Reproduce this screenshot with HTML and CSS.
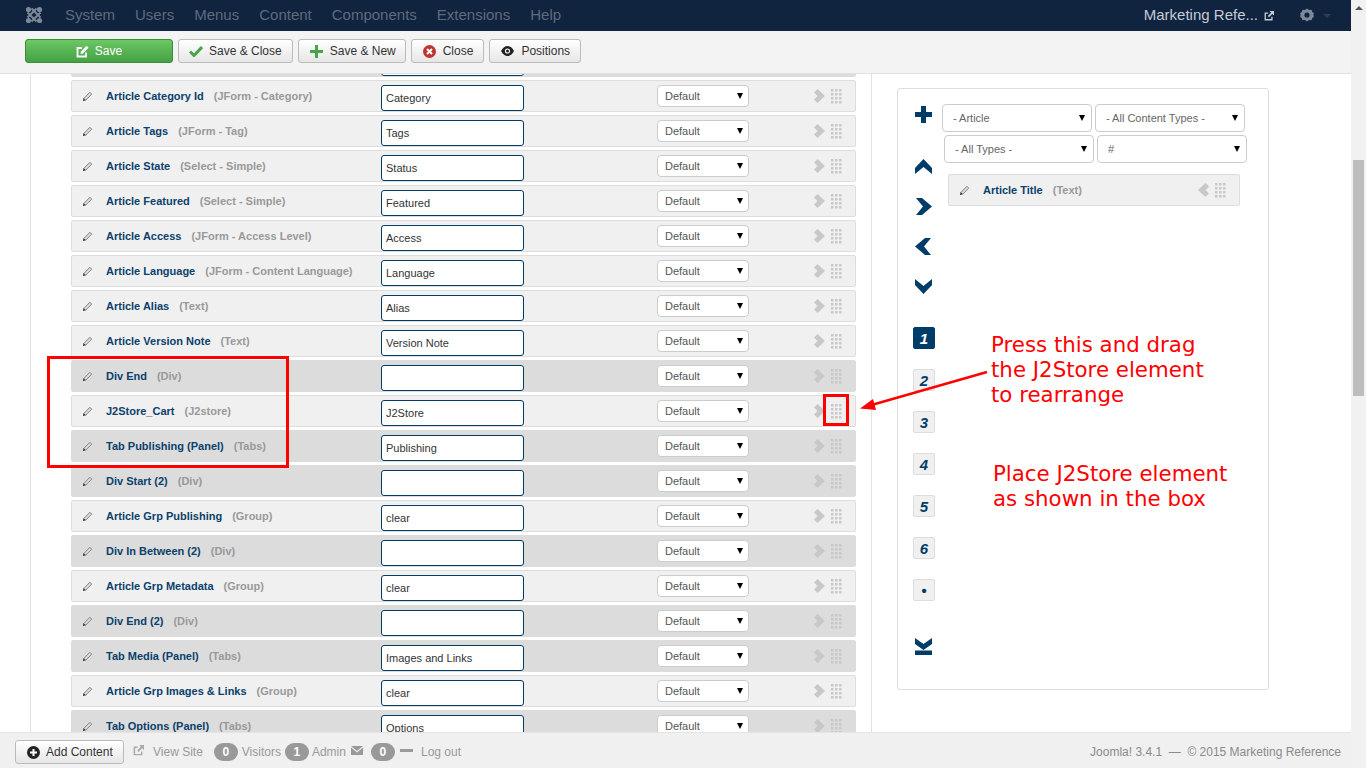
FILE: index.html
```html
<!DOCTYPE html>
<html lang="en">
<head>
    <meta charset="UTF-8">
    <meta name="viewport" content="width=device-width, initial-scale=1.0">
    <title>Template Manager: Edit Layout</title>
    <link rel="stylesheet" href="styles.css">
</head>
<body>
    <!-- Shared icons -->
    <svg class="defs" width="0" height="0">
        <symbol id="pencil" viewBox="0 0 12 12"><path d="M2 8.200L8.600 1.400l2 2L3.900 10.100z" fill="#ddd" stroke="#777" stroke-width="1"/><path d="M1 11l.8-3 2.200 2.200z" fill="#222"/></symbol>
        <symbol id="push" viewBox="0 0 11 14"><path d="M3.500 0L11 7l-7.500 7L0 10.500 3.500 7 0 3.500z" fill="#c8c8c8"/></symbol>
        <symbol id="pull" viewBox="0 0 11 14"><path d="M7.500 0L0 7l7.500 7L11 10.500 7.500 7 11 3.500z" fill="#c8c8c8"/></symbol>
        <symbol id="dots" viewBox="0 0 11 15"><path d="M0 0h2.500v2.500H0zM4 0h2.500v2.500H4zM8 0h2.500v2.500H8zM0 4h2.500v2.500H0zM4 4h2.500v2.500H4zM8 4h2.500v2.500H8zM0 8h2.500v2.500H0zM4 8h2.500v2.500H4zM8 8h2.500v2.500H8zM0 12h2.500v2.500H0zM4 12h2.500v2.500H4zM8 12h2.500v2.500H8z" fill="#c8c8c8"/></symbol>
        <symbol id="ext" viewBox="0 0 12 12"><path d="M9.500 7v3.500h-8v-8H5" fill="none" stroke="currentColor" stroke-width="1.600"/><path d="M6.500 0H12v5.500L10 3.500 6 7.500 4.500 6l4-4z" fill="currentColor"/></symbol>
    </svg>

    <div class="page">
        <!-- Top menu -->
        <nav class="navbar">
            <svg class="logo" width="18" height="18" viewBox="0 0 18 18"><path d="M2.500 6.500L11.500 15.500M6.500 2.500L15.500 11.500M15.500 6.500L6.500 15.500M11.500 2.500L2.500 11.500" stroke="#7d899b" stroke-width="2" fill="none"/><circle cx="3.500" cy="3.500" r="2.600" fill="#7d899b"/><circle cx="14.500" cy="3.500" r="2.600" fill="#7d899b"/><circle cx="3.500" cy="14.500" r="2.600" fill="#7d899b"/><circle cx="14.500" cy="14.500" r="2.600" fill="#7d899b"/></svg>
            <ul class="menu">
                <li>System</li>
                <li>Users</li>
                <li>Menus</li>
                <li>Content</li>
                <li>Components</li>
                <li>Extensions</li>
                <li>Help</li>
            </ul>
            <div class="nav-site">Marketing Refe...<svg class="nav-ext" width="10" height="10"><use href="#ext"/></svg></div>
            <svg class="gear" width="14" height="14" viewBox="0 0 14 14"><path d="M7 .5l2 1.500 2.400-.3 1 2.300 1.600 1.500-.7 1.500.7 1.500-1.600 1.500-1 2.300-2.400-.3-2 1.500-2-1.500-2.400.3-1-2.300L0 8.500.7 7 0 5.500 1.600 4l1-2.300L5 2z" fill="#7d899b"/><circle cx="7" cy="7" r="2.600" fill="#10233f"/></svg>
            <span class="nav-caret"></span>
        </nav>

        <!-- Save buttons -->
        <div class="toolbar">
            <button class="btn btn-save" type="button">
                <svg width="13" height="13" viewBox="0 0 13 13"><path d="M10 7.500V11.500H1.500V3H6" fill="none" stroke="#fff" stroke-width="1.800"/><path d="M5 6.500L10.500.8l2 2L7 8.500l-2.500.4z" fill="#fff"/></svg>
                Save
            </button>
            <button class="btn" type="button">
                <svg width="14" height="12" viewBox="0 0 14 12"><path d="M1 6.500l4 4L13 2" fill="none" stroke="#46a546" stroke-width="3"/></svg>
                Save &amp; Close
            </button>
            <button class="btn btn-new" type="button">
                <svg width="13" height="13" viewBox="0 0 13 13"><path d="M5 0h3v5h5v3H8v5H5V8H0V5h5z" fill="#46a546"/></svg>
                Save &amp; New
            </button>
            <button class="btn btn-wide" type="button">
                <svg width="13" height="13" viewBox="0 0 13 13"><circle cx="6.500" cy="6.500" r="6.500" fill="#bd362f"/><path d="M4 4l5 5M9 4l-5 5" stroke="#fff" stroke-width="2"/></svg>
                Close
            </button>
            <button class="btn btn-wide" type="button">
                <svg width="13" height="10" viewBox="0 0 13 10"><path d="M0 5c2-3.500 4-5 6.500-5S11 1.500 13 5c-2 3.500-4 5-6.500 5S2 8.500 0 5z" fill="#222"/><circle cx="6.500" cy="5" r="2.600" fill="#fff"/><circle cx="6.500" cy="5" r="1.500" fill="#222"/></svg>
                Positions
            </button>
        </div>

        <main class="main">
            <div class="pane">
                <div class="field-list">
                    <div class="row row-dark">
                        <input class="field field-first" type="text" value="">
                    </div>

                    <div class="row">
                        <svg class="pencil"><use href="#pencil"/></svg>
                        <div class="row-name"><b>Article Category Id</b><em>(JForm - Category)</em></div>
                        <input class="field" type="text" value="Category">
                        <span class="pick"><select><option>Default</option></select></span>
                        <svg class="push"><use href="#push"/></svg>
                        <svg class="dots"><use href="#dots"/></svg>
                    </div>
                    <div class="row">
                        <svg class="pencil"><use href="#pencil"/></svg>
                        <div class="row-name"><b>Article Tags</b><em>(JForm - Tag)</em></div>
                        <input class="field" type="text" value="Tags">
                        <span class="pick"><select><option>Default</option></select></span>
                        <svg class="push"><use href="#push"/></svg>
                        <svg class="dots"><use href="#dots"/></svg>
                    </div>
                    <div class="row">
                        <svg class="pencil"><use href="#pencil"/></svg>
                        <div class="row-name"><b>Article State</b><em>(Select - Simple)</em></div>
                        <input class="field" type="text" value="Status">
                        <span class="pick"><select><option>Default</option></select></span>
                        <svg class="push"><use href="#push"/></svg>
                        <svg class="dots"><use href="#dots"/></svg>
                    </div>
                    <div class="row">
                        <svg class="pencil"><use href="#pencil"/></svg>
                        <div class="row-name"><b>Article Featured</b><em>(Select - Simple)</em></div>
                        <input class="field" type="text" value="Featured">
                        <span class="pick"><select><option>Default</option></select></span>
                        <svg class="push"><use href="#push"/></svg>
                        <svg class="dots"><use href="#dots"/></svg>
                    </div>
                    <div class="row">
                        <svg class="pencil"><use href="#pencil"/></svg>
                        <div class="row-name"><b>Article Access</b><em>(JForm - Access Level)</em></div>
                        <input class="field" type="text" value="Access">
                        <span class="pick"><select><option>Default</option></select></span>
                        <svg class="push"><use href="#push"/></svg>
                        <svg class="dots"><use href="#dots"/></svg>
                    </div>
                    <div class="row">
                        <svg class="pencil"><use href="#pencil"/></svg>
                        <div class="row-name"><b>Article Language</b><em>(JForm - Content Language)</em></div>
                        <input class="field" type="text" value="Language">
                        <span class="pick"><select><option>Default</option></select></span>
                        <svg class="push"><use href="#push"/></svg>
                        <svg class="dots"><use href="#dots"/></svg>
                    </div>
                    <div class="row">
                        <svg class="pencil"><use href="#pencil"/></svg>
                        <div class="row-name"><b>Article Alias</b><em>(Text)</em></div>
                        <input class="field" type="text" value="Alias">
                        <span class="pick"><select><option>Default</option></select></span>
                        <svg class="push"><use href="#push"/></svg>
                        <svg class="dots"><use href="#dots"/></svg>
                    </div>
                    <div class="row">
                        <svg class="pencil"><use href="#pencil"/></svg>
                        <div class="row-name"><b>Article Version Note</b><em>(Text)</em></div>
                        <input class="field" type="text" value="Version Note">
                        <span class="pick"><select><option>Default</option></select></span>
                        <svg class="push"><use href="#push"/></svg>
                        <svg class="dots"><use href="#dots"/></svg>
                    </div>
                    <div class="row row-dark">
                        <svg class="pencil"><use href="#pencil"/></svg>
                        <div class="row-name"><b>Div End</b><em>(Div)</em></div>
                        <input class="field" type="text" value="">
                        <span class="pick"><select><option>Default</option></select></span>
                        <svg class="push"><use href="#push"/></svg>
                        <svg class="dots"><use href="#dots"/></svg>
                    </div>
                    <div class="row">
                        <svg class="pencil"><use href="#pencil"/></svg>
                        <div class="row-name"><b>J2Store_Cart</b><em>(J2store)</em></div>
                        <input class="field" type="text" value="J2Store">
                        <span class="pick"><select><option>Default</option></select></span>
                        <svg class="push"><use href="#push"/></svg>
                        <svg class="dots"><use href="#dots"/></svg>
                    </div>
                    <div class="row row-dark">
                        <svg class="pencil"><use href="#pencil"/></svg>
                        <div class="row-name"><b>Tab Publishing (Panel)</b><em>(Tabs)</em></div>
                        <input class="field" type="text" value="Publishing">
                        <span class="pick"><select><option>Default</option></select></span>
                        <svg class="push"><use href="#push"/></svg>
                        <svg class="dots"><use href="#dots"/></svg>
                    </div>
                    <div class="row row-dark">
                        <svg class="pencil"><use href="#pencil"/></svg>
                        <div class="row-name"><b>Div Start (2)</b><em>(Div)</em></div>
                        <input class="field" type="text" value="">
                        <span class="pick"><select><option>Default</option></select></span>
                        <svg class="push"><use href="#push"/></svg>
                        <svg class="dots"><use href="#dots"/></svg>
                    </div>
                    <div class="row">
                        <svg class="pencil"><use href="#pencil"/></svg>
                        <div class="row-name"><b>Article Grp Publishing</b><em>(Group)</em></div>
                        <input class="field" type="text" value="clear">
                        <span class="pick"><select><option>Default</option></select></span>
                        <svg class="push"><use href="#push"/></svg>
                        <svg class="dots"><use href="#dots"/></svg>
                    </div>
                    <div class="row row-dark">
                        <svg class="pencil"><use href="#pencil"/></svg>
                        <div class="row-name"><b>Div In Between (2)</b><em>(Div)</em></div>
                        <input class="field" type="text" value="">
                        <span class="pick"><select><option>Default</option></select></span>
                        <svg class="push"><use href="#push"/></svg>
                        <svg class="dots"><use href="#dots"/></svg>
                    </div>
                    <div class="row">
                        <svg class="pencil"><use href="#pencil"/></svg>
                        <div class="row-name"><b>Article Grp Metadata</b><em>(Group)</em></div>
                        <input class="field" type="text" value="clear">
                        <span class="pick"><select><option>Default</option></select></span>
                        <svg class="push"><use href="#push"/></svg>
                        <svg class="dots"><use href="#dots"/></svg>
                    </div>
                    <div class="row row-dark">
                        <svg class="pencil"><use href="#pencil"/></svg>
                        <div class="row-name"><b>Div End (2)</b><em>(Div)</em></div>
                        <input class="field" type="text" value="">
                        <span class="pick"><select><option>Default</option></select></span>
                        <svg class="push"><use href="#push"/></svg>
                        <svg class="dots"><use href="#dots"/></svg>
                    </div>
                    <div class="row row-dark">
                        <svg class="pencil"><use href="#pencil"/></svg>
                        <div class="row-name"><b>Tab Media (Panel)</b><em>(Tabs)</em></div>
                        <input class="field" type="text" value="Images and Links">
                        <span class="pick"><select><option>Default</option></select></span>
                        <svg class="push"><use href="#push"/></svg>
                        <svg class="dots"><use href="#dots"/></svg>
                    </div>
                    <div class="row">
                        <svg class="pencil"><use href="#pencil"/></svg>
                        <div class="row-name"><b>Article Grp Images &amp; Links</b><em>(Group)</em></div>
                        <input class="field" type="text" value="clear">
                        <span class="pick"><select><option>Default</option></select></span>
                        <svg class="push"><use href="#push"/></svg>
                        <svg class="dots"><use href="#dots"/></svg>
                    </div>
                    <div class="row row-dark">
                        <svg class="pencil"><use href="#pencil"/></svg>
                        <div class="row-name"><b>Tab Options (Panel)</b><em>(Tabs)</em></div>
                        <input class="field" type="text" value="Options">
                        <span class="pick"><select><option>Default</option></select></span>
                        <svg class="push"><use href="#push"/></svg>
                        <svg class="dots"><use href="#dots"/></svg>
                    </div>
                </div>
            </div>

            <!-- Field picker -->
            <aside class="panel">
                <div class="tools">
                    <svg class="tool tool-plus" viewBox="0 0 17 17"><path d="M6 0h5v6h6v5h-6v6H6v-6H0V6h6z"/></svg>
                    <svg class="tool tool-move" viewBox="0 0 17 17"><path d="M8.500 1L17 10v6l-8.500-7L0 16v-6z"/></svg>
                    <svg class="tool tool-move" viewBox="0 0 17 17"><path d="M1 0h6l10 8.500L7 17H1l7-8.500z"/></svg>
                    <svg class="tool tool-move" viewBox="0 0 17 17"><path d="M16 0h-6L0 8.500 10 17h6L9 8.500z"/></svg>
                    <svg class="tool tool-move" viewBox="0 0 17 17"><path d="M0 1l8.500 7L17 1v6l-8.500 9L0 7z"/></svg>
                    <div class="pages">
                        <span class="page-no page-on">1</span>
                        <span class="page-no">2</span>
                        <span class="page-no">3</span>
                        <span class="page-no">4</span>
                        <span class="page-no">5</span>
                        <span class="page-no">6</span>
                        <span class="page-no">&bull;</span>
                    </div>
                    <svg class="tool tool-end" viewBox="0 0 17 17"><path d="M0 0l8.500 6L17 0v6l-8.500 6L0 6zM0 12.500h17V17H0z"/></svg>
                </div>
                <div class="picker">
                    <div class="picker-line">
                        <span class="pick pick-wide"><select><option>- Article</option></select></span>
                        <span class="pick pick-wide"><select><option>- All Content Types -</option></select></span>
                    </div>
                    <div class="picker-line picker-shift">
                        <span class="pick pick-wide"><select><option>- All Types -</option></select></span>
                        <span class="pick pick-wide"><select><option>#</option></select></span>
                    </div>
                    <div class="row row-picked">
                        <svg class="pencil"><use href="#pencil"/></svg>
                        <div class="row-name"><b>Article Title</b><em>(Text)</em></div>
                        <svg class="push"><use href="#pull"/></svg>
                        <svg class="dots"><use href="#dots"/></svg>
                    </div>
                </div>
            </aside>
        </main>

        <!-- Status bar -->
        <footer class="status">
            <button class="btn btn-add" type="button">
                <svg width="13" height="13" viewBox="0 0 13 13"><circle cx="6.500" cy="6.500" r="6.500" fill="#222"/><path d="M5.500 3h2v2.500H10v2H7.500V10h-2V7.500H3v-2h2.500z" fill="#fff"/></svg>
                Add Content
            </button>
            <svg class="status-ext" width="11" height="11"><use href="#ext"/></svg>
            <span class="status-link status-view">View Site</span>
            <span class="badge">0</span><span class="status-link status-tight">Visitors</span>
            <span class="badge">1</span><span class="status-link status-admin">Admin</span>
            <svg class="mail" width="12" height="9" viewBox="0 0 12 9"><path d="M0 0h12L6 5zM0 1.500v7.500h12V1.500L6 6.500z" fill="#999"/></svg>
            <span class="badge">0</span>
            <span class="minus"></span>
            <span class="status-link">Log out</span>
            <span class="copy">Joomla! 3.4.1 &nbsp;&mdash;&nbsp; &copy; 2015 Marketing Reference</span>
        </footer>
    </div>

    <!-- Fake window scrollbar -->
    <div class="scrollbar">
        <span class="scroll-up"></span>
        <span class="scroll-thumb"></span>
    </div>

    <!-- Red notes drawn on top of the screenshot -->
    <div class="mark mark-rows"></div>
    <div class="mark mark-handle"></div>
    <svg class="mark-arrow" width="130" height="44" viewBox="0 0 130 44"><path d="M127 2L8 36" stroke="#f00" stroke-width="2.500" fill="none"/><path d="M0 38.500l13-9.500 3 11z" fill="#f00"/></svg>
    <p class="note note-drag">Press this and drag<br>the J2Store element<br>to rearrange</p>
    <p class="note note-place">Place J2Store element<br>as shown in the box</p>
</body>
</html>
```

FILE: styles.css
```css
* {
    box-sizing: border-box;
}

body {
    margin: 0;
    height: 100vh;
    display: flex;
    overflow: hidden;
    background: #fff;
    color: #333;
    font-family: "Liberation Sans", Arial, sans-serif;
    font-size: 12px;
}

.defs {
    position: absolute;
}

.page {
    flex: 1;
    min-width: 0;
    display: flex;
    flex-direction: column;
}

/* Top menu */
.navbar {
    height: 31px;
    flex: none;
    display: flex;
    align-items: center;
    padding: 0 0 2px 25px;
    background: #10233f;
    font-size: 15px;
}

.menu {
    display: flex;
    gap: 20px;
    list-style: none;
    margin: 0 0 0 22px;
    padding: 0;
    color: #5f6b7c;
}

.nav-site {
    margin-left: auto;
    color: #c4ccd6;
}

.nav-ext {
    margin-left: 6px;
    color: #c4ccd6;
    vertical-align: -1px;
}

.gear {
    margin-left: 26px;
}

.nav-caret {
    width: 0;
    height: 0;
    margin: 3px 20px 0 9px;
    border: 4px solid transparent;
    border-top-color: #2d3d55;
    border-bottom: 0;
}

/* Save buttons */
.toolbar {
    height: 43px;
    flex: none;
    display: flex;
    gap: 5px;
    padding: 8px 0 0 25px;
    background: #f3f3f3;
    border-bottom: 1px solid #e0e0e0;
}

.btn {
    height: 24px;
    display: inline-flex;
    align-items: center;
    gap: 6px;
    padding: 0 10px;
    border: 1px solid #bbb;
    border-radius: 3px;
    background: linear-gradient(#fff, #e6e6e6);
    color: #333;
    font: 12px "Liberation Sans", Arial, sans-serif;
    white-space: nowrap;
}

.btn-save {
    width: 148px;
    justify-content: center;
    border-color: #3d8b3d;
    background: linear-gradient(#6cc764, #44a244);
    color: #fff;
}

.btn-new {
    width: 108px;
    gap: 7px;
    padding: 0 0 0 11px;
}

.btn-wide {
    gap: 7px;
    padding: 0 10px 0 11px;
}

/* Main area */
.main {
    flex: 1;
    min-height: 0;
    display: flex;
    align-items: flex-start;
    overflow: hidden;
    padding-left: 30px;
}

.pane {
    width: 842px;
    height: 100%;
    flex: none;
    overflow: hidden;
    padding: 0 15px 0 40px;
    border: 1px solid #e2e2e2;
    border-width: 0 1px;
}

.field-list {
    margin-top: -29px;
}

.row {
    height: 32px;
    display: flex;
    align-items: center;
    margin-bottom: 3px;
    padding-left: 10px;
    background: #f0f0f0;
    border: 1px solid #ddd;
    border-radius: 2px;
}

.row-dark {
    background: #dcdcdc;
    border-color: #dcdcdc;
}

.pencil {
    width: 11px;
    height: 11px;
    flex: none;
}

.row-name {
    width: 288px;
    flex: none;
    padding-left: 13px;
    font-size: 11px;
    white-space: nowrap;
}

.row-name b {
    color: #0b416b;
}

.row-name em {
    margin-left: 10px;
    color: #999;
    font-style: normal;
    font-weight: bold;
}

.field {
    width: 143px;
    height: 26px;
    flex: none;
    margin-top: 4px;
    padding: 0 4px;
    background: #fff;
    border: 1px solid #003c68;
    border-radius: 3px;
    color: #333;
    font: 11px "Liberation Sans", Arial, sans-serif;
}

.field-first {
    margin-left: 299px;
}

.pick {
    width: 92px;
    height: 22px;
    flex: none;
    display: block;
    position: relative;
    margin: 0 65px 0 133px;
}

.pick::after {
    content: "";
    position: absolute;
    top: 8px;
    right: 6px;
    border: 3.5px solid transparent;
    border-top: 6px solid #000;
    border-bottom: 0;
    pointer-events: none;
}

.pick select {
    width: 100%;
    height: 100%;
    display: block;
    appearance: none;
    padding: 0 7px;
    background: #fff;
    border: 1px solid #ccc;
    border-radius: 4px;
    color: #555;
    font: 11px "Liberation Sans", Arial, sans-serif;
}

.push {
    width: 11px;
    height: 14px;
    flex: none;
}

.dots {
    width: 11px;
    height: 15px;
    flex: none;
    margin-left: 6px;
}

/* Field picker */
.panel {
    width: 372px;
    height: 602px;
    flex: none;
    display: flex;
    margin: 14px 0 0 25px;
    padding: 15px 0 0 15px;
    border: 1px solid #ddd;
    border-radius: 3px;
}

.tools {
    width: 29px;
    flex: none;
    display: flex;
    flex-direction: column;
    padding-left: 2px;
}

.tool {
    width: 17px;
    height: 17px;
    display: block;
    flex: none;
    fill: #003c68;
}

.tool-plus {
    margin-top: 2px;
}

.tool-move {
    margin-top: 23px;
}

.tool-move:nth-child(2) {
    margin-top: 35px;
}

.pages {
    display: flex;
    flex-direction: column;
    gap: 20px;
    margin: 32px 0 0 -2px;
}

.page-no {
    width: 22px;
    height: 22px;
    display: flex;
    align-items: center;
    justify-content: center;
    background: #f0f0f0;
    border: 1px solid #ddd;
    border-radius: 2px;
    color: #003c68;
    font-size: 15px;
    font-style: italic;
    font-weight: bold;
}

.page-on {
    background: #003c68;
    border-color: #003c68;
    color: #fff;
}

.tool-end {
    margin-top: 37px;
}

.picker {
    flex: 1;
    min-width: 0;
}

.picker-line {
    display: flex;
    gap: 3px;
    margin-bottom: 3px;
}

.picker-shift {
    margin-left: 2px;
}

.pick-wide {
    width: 150px;
    height: 28px;
    margin: 0;
}

.pick-wide::after {
    top: 11px;
    right: 7px;
}

.pick-wide select {
    padding: 0 10px;
    font-size: 11px;
    color: #666;
}

.row-picked {
    width: 292px;
    margin: 11px 0 0 6px;
}

.row-picked .row-name {
    width: 228px;
}

/* Status bar */
.status {
    height: 36px;
    flex: none;
    display: flex;
    align-items: center;
    padding: 3px 10px 0 15px;
    background: #f0f0f0;
    border-top: 1px solid #e4e4e4;
    color: #999;
    font-size: 12px;
}

.btn-add {
    width: 109px;
    flex: none;
    gap: 6px;
    padding: 0 0 0 11px;
    margin-right: 9px;
}

.status-ext {
    color: #aaa;
    margin-bottom: 3px;
}

.status-link {
    color: #999;
}

.status-view {
    margin: 0 11px 0 9px;
}

.status-tight {
    margin: 0 4px;
}

.status-admin {
    margin: 0 5px 0 3px;
}

.badge {
    width: 24px;
    height: 18px;
    display: inline-flex;
    align-items: center;
    justify-content: center;
    background: #999;
    border-radius: 9px;
    color: #fff;
    font-weight: bold;
}

.mail {
    margin: 0 8px 3px 0;
}

.minus {
    width: 13px;
    height: 3px;
    margin: 0 8px 3px 5px;
    background: #999;
}

.copy {
    margin-left: auto;
    color: #8a8a8a;
}

/* Fake window scrollbar */
.scrollbar {
    width: 15px;
    flex: none;
    position: relative;
    background: #f1f1f1;
}

.scroll-up {
    position: absolute;
    top: 6px;
    left: 4px;
    border: 4px solid transparent;
    border-bottom: 4px solid #555;
    border-top: 0;
}

.scroll-thumb {
    position: absolute;
    top: 160px;
    left: 2px;
    width: 11px;
    height: 236px;
    background: #bdbdbd;
}

/* Red notes */
.mark {
    position: absolute;
    border: 3px solid #f00;
}

.mark-rows {
    left: 47px;
    top: 356px;
    width: 242px;
    height: 112px;
}

.mark-handle {
    left: 823px;
    top: 394px;
    width: 26px;
    height: 32px;
}

.mark-arrow {
    position: absolute;
    left: 860px;
    top: 370px;
}

.note {
    position: absolute;
    margin: 0;
    color: #f00;
    font-family: "DejaVu Sans", Verdana, sans-serif;
    font-size: 21.33px;
    line-height: 25px;
    white-space: nowrap;
}

.note-drag {
    left: 991px;
    top: 332px;
}

.note-place {
    left: 993px;
    top: 461px;
}
```
